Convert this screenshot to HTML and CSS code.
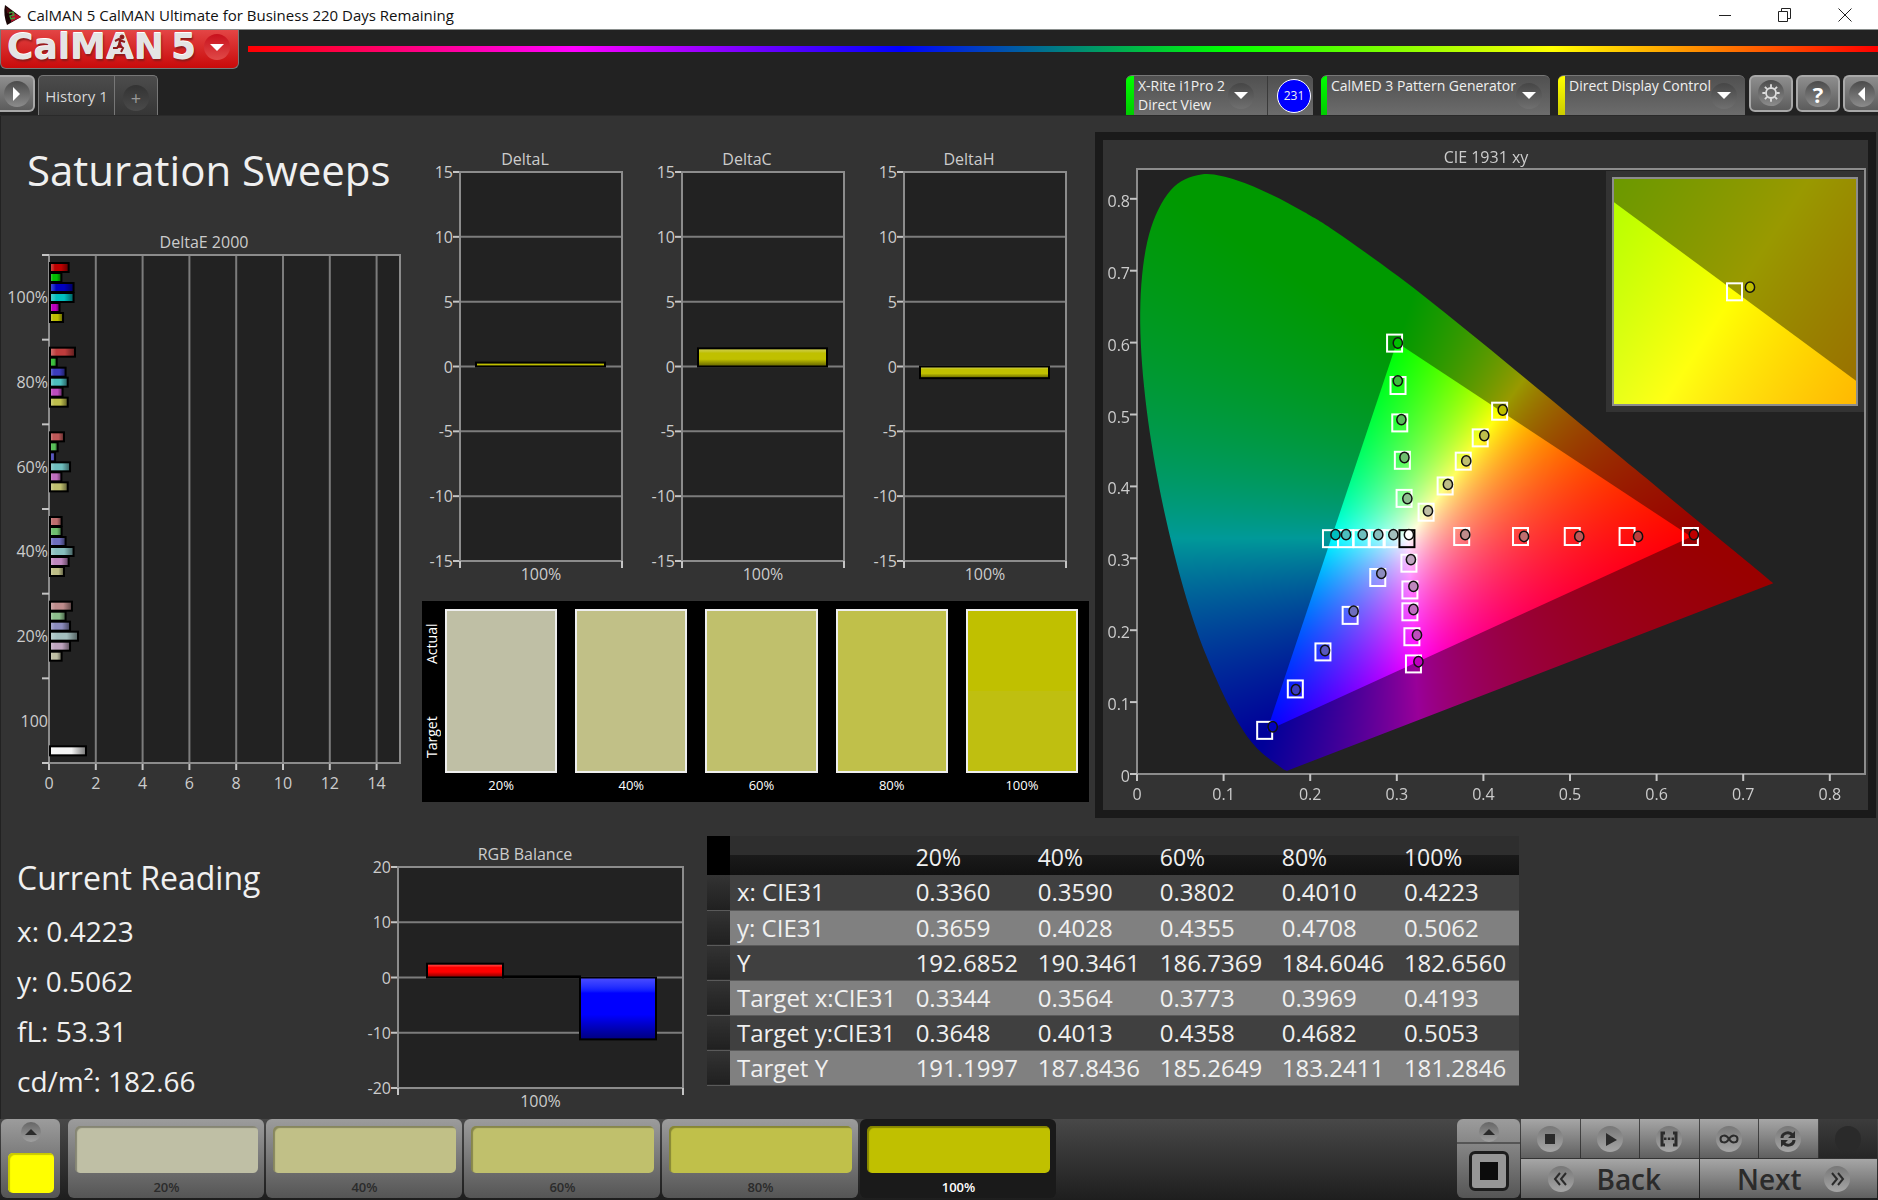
FILE: index.html
```html
<!DOCTYPE html>
<html lang="en">
<head>
<meta charset="utf-8">
<title>CalMAN 5 CalMAN Ultimate for Business 220 Days Remaining</title>
<link rel="stylesheet" href="styles.css">
</head>
<body>

<div class="titlebar">
    <svg class="app-icon" viewBox="0 0 20 22">
        <path d="M2 1 L18 13 L4 21 Q0 10 2 1Z" fill="#1a0505"/>
        <path d="M9 8 L18 13 L8 18Z" fill="#b3122a"/>
        <path d="M3 3 L8 7 L7 10 L4 9Z" fill="#4a0d10"/>
        <path d="M6 9 l4 -1 l1 3 l-4 1 l1 3 l4 -1" fill="none" stroke="#3f9b3a" stroke-width="1.4"/>
    </svg>
    <span class="window-title">CalMAN 5 CalMAN Ultimate for Business 220 Days Remaining</span>
    <button class="win-btn" aria-label="Minimize"><svg viewBox="0 0 16 16"><path d="M2 8.500H14"/></svg></button>
    <button class="win-btn" aria-label="Restore"><svg viewBox="0 0 16 16"><path d="M1.500 4.500H10.500V14.500H1.500Z M4.500 4.500V1.500H13.500V11.500H10.500"/></svg></button>
    <button class="win-btn" aria-label="Close"><svg viewBox="0 0 16 16"><path d="M1.500 1.500L14.500 14.500M14.500 1.500L1.500 14.500"/></svg></button>
</div>

<header class="masthead">
    <div class="brand-row">
        <button class="logo" aria-label="CalMAN 5 menu">
            <span class="logo-text">CalM<span class="logo-a">A<svg class="runner" viewBox="0 0 16 20"><circle cx="10" cy="3" r="2"/><path d="M3 7 L7 5 L10 7 L13 8 M8 6 L7 11 L11 14 L9 18 M7 11 L5 14 L1 14"/></svg></span>N</span>
            <span class="logo-text">5</span>
            <span class="round round-red"><i class="tri down"></i></span>
        </button>
        <div class="rainbow"></div>
    </div>
    <div class="tab-row">
        <button class="square-btn edge-left" aria-label="Expand"><span class="round"><i class="tri right"></i></span></button>
        <nav class="tabs">
            <button class="tab">History 1</button>
            <button class="tab tab-add" aria-label="Add tab"><span class="round round-dark">+</span></button>
        </nav>
        <div class="devices">
            <div class="device device-meter">
                <span class="stripe green"></span>
                <span class="device-name">X-Rite i1Pro 2<br>Direct View</span>
                <button class="round" aria-label="Meter menu"><i class="tri down"></i></button>
                <span class="badge-cell"><span class="badge">231</span></span>
            </div>
            <div class="device device-source">
                <span class="stripe green"></span>
                <span class="device-name">CalMED 3 Pattern Generator</span>
                <button class="round" aria-label="Source menu"><i class="tri down"></i></button>
            </div>
            <div class="device device-display">
                <span class="stripe yellow"></span>
                <span class="device-name">Direct Display Control</span>
                <button class="round" aria-label="Display menu"><i class="tri down"></i></button>
            </div>
        </div>
        <button class="square-btn" aria-label="Settings"><span class="round">
            <svg class="gear" viewBox="0 0 22 22"><circle cx="11" cy="11" r="5.500"/><path d="M11 1.500V5M11 17V20.500M1.500 11H5M17 11H20.500M4.300 4.300L6.800 6.800M15.200 15.200L17.700 17.700M4.300 17.700L6.800 15.200M15.200 6.800L17.700 4.300"/></svg>
        </span></button>
        <button class="square-btn" aria-label="Help"><span class="round help">?</span></button>
        <button class="square-btn edge-right" aria-label="Collapse"><span class="round"><i class="tri left"></i></span></button>
    </div>
</header>

<main class="workspace">
    <section class="upper">
        <div class="col-left">
            <h1>Saturation Sweeps</h1>
            <svg id="delta-e" class="chart" viewBox="0 0 402 570"></svg>
        </div>
        <div class="col-mid">
            <div class="deltas">
                <svg id="delta-l" class="chart" viewBox="0 0 196 437"></svg>
                <svg id="delta-c" class="chart" viewBox="0 0 196 437"></svg>
                <svg id="delta-h" class="chart" viewBox="0 0 196 437"></svg>
            </div>
            <div class="patches">
                <div class="patch-side"><span>Target</span><span>Actual</span></div>
                <figure class="patch"><div class="p20"></div><figcaption>20%</figcaption></figure>
                <figure class="patch"><div class="p40"></div><figcaption>40%</figcaption></figure>
                <figure class="patch"><div class="p60"></div><figcaption>60%</figcaption></figure>
                <figure class="patch"><div class="p80"></div><figcaption>80%</figcaption></figure>
                <figure class="patch"><div class="p100"></div><figcaption>100%</figcaption></figure>
            </div>
        </div>
        <div class="col-right">
            <div class="cie">
                <canvas id="cie-fill" width="765" height="670"></canvas>
                <svg id="cie" class="chart" viewBox="0 0 765 670"></svg>
            </div>
        </div>
    </section>

    <section class="lower">
        <div class="reading">
            <h2>Current Reading</h2>
            <p>x: 0.4223</p>
            <p>y: 0.5062</p>
            <p>fL: 53.31</p>
            <p>cd/m²: 182.66</p>
        </div>
        <svg id="rgb" class="chart" viewBox="0 0 317 272"></svg>
        <table class="results">
            <colgroup><col class="c-mark"><col class="c-name"><col><col><col><col><col></colgroup>
            <thead>
                <tr><th class="mark"></th><th></th><th>20%</th><th>40%</th><th>60%</th><th>80%</th><th>100%</th></tr>
            </thead>
            <tbody>
                <tr><td class="mark"></td><th>x: CIE31</th><td>0.3360</td><td>0.3590</td><td>0.3802</td><td>0.4010</td><td>0.4223</td></tr>
                <tr><td class="mark"></td><th>y: CIE31</th><td>0.3659</td><td>0.4028</td><td>0.4355</td><td>0.4708</td><td>0.5062</td></tr>
                <tr><td class="mark"></td><th>Y</th><td>192.6852</td><td>190.3461</td><td>186.7369</td><td>184.6046</td><td>182.6560</td></tr>
                <tr><td class="mark"></td><th>Target x:CIE31</th><td>0.3344</td><td>0.3564</td><td>0.3773</td><td>0.3969</td><td>0.4193</td></tr>
                <tr><td class="mark"></td><th>Target y:CIE31</th><td>0.3648</td><td>0.4013</td><td>0.4358</td><td>0.4682</td><td>0.5053</td></tr>
                <tr><td class="mark"></td><th>Target Y</th><td>191.1997</td><td>187.8436</td><td>185.2649</td><td>183.2411</td><td>181.2846</td></tr>
            </tbody>
        </table>
    </section>
</main>

<footer class="bar">
    <button class="current" aria-label="Current colour">
        <span class="round round-small"><i class="tri up"></i></span>
        <span class="current-color"></span>
    </button>
    <div class="levels">
        <button class="level"><span class="p20"></span>20%</button>
        <button class="level"><span class="p40"></span>40%</button>
        <button class="level"><span class="p60"></span>60%</button>
        <button class="level"><span class="p80"></span>80%</button>
        <button class="level selected"><span class="p100"></span>100%</button>
    </div>
    <div class="window-size">
        <button class="size-up" aria-label="Pattern size"><span class="round round-small"><i class="tri up"></i></span></button>
        <button class="size-box" aria-label="Pattern window"><span class="size-frame"><i></i></span></button>
    </div>
    <div class="transport">
        <button aria-label="Stop"><span class="round"><svg viewBox="0 0 26 26"><path d="M8 8H18V18H8Z"/></svg></span></button>
        <button aria-label="Play"><span class="round"><svg viewBox="0 0 26 26"><path d="M9 7L20 14L9 20Z"/></svg></span></button>
        <button aria-label="Read series"><span class="round"><svg viewBox="0 0 26 26"><path class="line" d="M9 7H6V19H9M17 7H20V19H17"/><path d="M8 11.500h2.500v2.500h-2.500zM11.800 11.500h2.500v2.500h-2.500zM15.500 11.500h2.500v2.500h-2.500z"/></svg></span></button>
        <button aria-label="Continuous"><span class="round"><svg viewBox="0 0 26 26"><path class="thin" d="M13 13C10 8 4.500 9 4.500 13S10 18 13 13S21.500 9 21.500 13S16 18 13 13Z"/></svg></span></button>
        <button aria-label="Repeat"><span class="round"><svg viewBox="0 0 26 26"><path class="line" d="M7 12C7 7 14 5 17.500 9M19 14C19 19 12 21 8.500 17"/><path d="M20 5V12H13ZM6 21V14H13Z"/></svg></span></button>
        <button class="off" aria-label="Record" disabled><span class="round"></span></button>
        <button class="wide back"><span class="round"><svg viewBox="0 0 26 26"><path class="thin" d="M12 7L7 13L12 19M18 7L13 13L18 19"/></svg></span>Back</button>
        <button class="wide next">Next<span class="round"><svg viewBox="0 0 26 26"><path class="thin" d="M8 7L13 13L8 19M14 7L19 13L14 19"/></svg></span></button>
    </div>
</footer>

<script src="script.js"></script>
</body>
</html>
```
FILE: styles.css
```css
* {
    box-sizing: border-box;
}
body {
    margin: 0;
    min-height: 100vh;
    display: flex;
    flex-direction: column;
    background: #222;
    color: #f0f0f0;
    font-family: "Open Sans", "Noto Sans", sans-serif;
    font-size: 14px;
}
button {
    margin: 0;
    padding: 0;
    border: 0;
    background: none;
    color: inherit;
    font: inherit;
}
h1, h2, p, figure {
    margin: 0;
    font-weight: normal;
}

/* window title bar */
.titlebar {
    display: flex;
    align-items: center;
    height: 30px;
    padding: 0 3px;
    background: #fff;
    border-bottom: 1px solid #8a8f8d;
    color: #111;
}
.app-icon {
    width: 20px;
    height: 22px;
    margin-right: 4px;
}
.window-title {
    flex: 1;
    font-size: 15px;
    line-height: 20px;
}
.win-btn {
    width: 60px;
    height: 28px;
}
.win-btn svg {
    width: 16px;
    height: 16px;
    fill: none;
    stroke: #222;
    display: block;
    margin: 0 auto;
}

/* header */
.brand-row {
    display: flex;
    height: 45px;
}
.logo {
    display: flex;
    align-items: center;
    width: 239px;
    height: 39px;
    padding: 0 8px 4px 6px;
    gap: 7px;
    border: 1px solid #777;
    border-top: 0;
    border-radius: 0 0 6px 6px;
    background: linear-gradient(#e34545, #c90a0a);
}
.logo-text {
    font: bold 36px/36px "DejaVu Sans", sans-serif;
    color: #e4e4e4;
    text-shadow: 0 -1px 0 #fff, 1px 2px 2px #8d1a1a;
}
.logo-a {
    position: relative;
}
.runner {
    position: absolute;
    left: 6px;
    top: 8px;
    width: 16px;
    height: 20px;
    fill: #8d1a1a;
    stroke: #8d1a1a;
}
.runner path {
    fill: none;
    stroke-width: 2;
}
.logo .round {
    margin-left: auto;
}
.rainbow {
    flex: 1;
    height: 6px;
    margin: 16px 0 0 9px;
    background: linear-gradient(to right, #f00, #f0f, #00f, #0f0, #ff0, #f00);
}
.tab-row {
    display: flex;
    height: 40px;
}
.round {
    display: inline-flex;
    align-items: center;
    justify-content: center;
    flex: none;
    width: 26px;
    height: 26px;
    border-radius: 50%;
    background: linear-gradient(#4b4b4b, #8c8c8c);
    color: #fff;
}
.round-red {
    background: linear-gradient(#c8101c, #e04a48);
}
.round-dark {
    background: linear-gradient(#333, #4a4a4a);
    color: #999;
    font-size: 18px;
}
.round-small {
    width: 20px;
    height: 20px;
    background: linear-gradient(#666, #a0a0a0);
}
.tri {
    border: 7px solid transparent;
}
.tri.down {
    border-top-color: #fff;
    border-bottom: 0;
}
.tri.right {
    border-left-color: #fff;
    border-right: 0;
}
.tri.left {
    border-right-color: #fff;
    border-left: 0;
}
.tri.up {
    border-width: 6px;
    border-bottom-color: #2b2b2b;
    border-top: 0;
}
.square-btn {
    width: 44px;
    height: 37px;
    margin-left: 3px;
    border: 2px solid #a8a8a8;
    border-radius: 6px;
    background: linear-gradient(#8e8e8e, #5c5c5c);
}
.edge-left {
    width: 35px;
    margin-left: 0;
    border-left: 0;
    border-radius: 0 6px 6px 0;
}
.edge-right {
    width: 35px;
    border-right: 0;
    border-radius: 6px 0 0 6px;
}
.gear {
    width: 20px;
    height: 20px;
    fill: none;
    stroke: #ddd;
    stroke-width: 2;
}
.help {
    font-size: 22px;
    font-weight: bold;
}
.tabs {
    display: flex;
    margin-left: 3px;
    border: 1px solid #777;
    border-bottom: 0;
    border-radius: 5px 5px 0 0;
    background: linear-gradient(#4c4c4c, #363636);
}
.tab {
    width: 76px;
    border-right: 1px solid #777;
    font-size: 15px;
    color: #d8d8d8;
}
.tab-add {
    width: 42px;
    padding-top: 4px;
    border: 0;
}
.devices {
    display: flex;
    gap: 8px;
    margin: 0 1px 0 auto;
}
.device {
    display: flex;
    align-items: center;
    overflow: hidden;
    border-top: 1px solid #777;
    border-radius: 6px 6px 0 0;
    background: linear-gradient(#505050, #6c6c6c);
}
.device-meter {
    width: 187px;
}
.device-source {
    width: 229px;
}
.device-display {
    width: 187px;
}
.stripe {
    width: 8px;
    align-self: stretch;
    margin-right: 4px;
}
.stripe.green {
    background: linear-gradient(#0f0, #0c0);
}
.stripe.yellow {
    background: linear-gradient(#ff0, #cc0);
}
.device-name {
    flex: 1;
    align-self: flex-start;
    line-height: 19px;
    white-space: nowrap;
}
.device .round {
    margin-right: 8px;
    background: linear-gradient(#464646, #707070);
}
.badge-cell {
    display: flex;
    align-items: center;
    justify-content: flex-end;
    width: 46px;
    align-self: stretch;
    padding-right: 2px;
    border-left: 1px solid #3a3a3a;
    margin-left: 5px;
}
.badge {
    width: 34px;
    height: 34px;
    border: 1px solid #fff;
    border-radius: 50%;
    background: #00f;
    font-size: 12px;
    line-height: 32px;
    text-align: center;
}

/* workspace */
.workspace {
    flex: 1;
    background: #333;
    border-top: 1px solid #2a2a2a;
    box-shadow: inset 1px 0 #222;
}
.chart {
    display: block;
    width: 100%;
    height: auto;
}
.chart text {
    font-size: 16px;
    fill: #ccc;
}
.chart .end {
    text-anchor: end;
}
.chart .mid {
    text-anchor: middle;
}
.plot {
    fill: #222;
}
.frame {
    fill: none;
    stroke: #8c8c8c;
    stroke-width: 2;
}
.grid {
    stroke: #7c7c7c;
    stroke-width: 2;
}
.tick {
    stroke: #c4c4c4;
    stroke-width: 2;
}
.upper {
    display: grid;
    grid-template-columns: 402fr 687fr 787fr;
    padding-right: 2px;
}
h1 {
    padding: 24px 0 30px 27px;
    font-size: 42px;
    line-height: 60px;
}
.col-mid {
    padding: 32px 0 0 20px;
}
.deltas {
    display: grid;
    grid-template-columns: repeat(3, 1fr);
    gap: 26px;
    padding: 0 21px 0 6px;
}
.patches {
    display: flex;
    gap: 18px;
    margin-top: 16px;
    padding: 8px 11px 4px 0;
    background: #000;
    color: #fff;
}
.patch-side {
    display: flex;
    justify-content: space-between;
    width: 23px;
    margin: 0 -18px 25px 0;
    padding: 15px 0;
    line-height: 20px;
    writing-mode: vertical-rl;
    transform: rotate(180deg);
}
.patch {
    flex: 1;
    font-size: 13px;
    text-align: center;
}
.patch div {
    height: 164px;
    border: 2px solid #eee;
}
.patch figcaption {
    line-height: 25px;
}
.p20 {
    background: #bfbfa5;
}
.p40 {
    background: #c1c087;
}
.p60 {
    background: #c0c06c;
}
.p80 {
    background: #c0c04a;
}
.p100 {
    background: #c0c000;
}
.patch .p100 {
    background: linear-gradient(#c0c000 50%, #bfbf10 50%);
}
.col-right {
    padding: 16px 0 0 6px;
}
.cie {
    display: grid;
    border: 8px solid #1a1a1a;
}
.cie > * {
    grid-area: 1 / 1;
    width: 100%;
}
.marker {
    fill: none;
    stroke: #fff;
    stroke-width: 2;
}
.marker.white {
    stroke: #000;
}
.inset-gap {
    fill: none;
    stroke: #333;
    stroke-width: 6;
}

/* readings, balance and results */
.lower {
    display: grid;
    grid-template-columns: 367fr 317fr 23fr 812fr 359fr;
    align-items: start;
    padding-top: 18px;
}
.lower .chart {
    margin-top: 5px;
}
.reading {
    padding: 18px 0 0 17px;
}
.reading h2 {
    font-size: 32px;
    line-height: 48px;
    margin-bottom: 4px;
}
.reading p {
    font-size: 28px;
    line-height: 50px;
}
.results {
    grid-column: 4;
    width: 100%;
    table-layout: fixed;
    border-collapse: collapse;
    font-size: 24px;
    line-height: 34px;
    white-space: nowrap;
}
.c-mark {
    width: 23px;
}
.c-name {
    width: 22%;
}
.results th, .results td {
    padding: 0 0 0 7px;
    text-align: left;
    font-weight: normal;
}
.results thead th {
    height: 39px;
    padding-top: 2px;
    font-size: 23px;
    background: linear-gradient(#2e2e2e 50%, #1a1a1a 50%, #111);
}
.results thead .mark {
    background: #000;
}
.results tbody tr {
    height: 35px;
    background: #404040;
    border-bottom: 1px solid #5a5a5a;
}
.results tbody tr:nth-child(even) {
    background: #808080;
}
.results tbody .mark {
    background: linear-gradient(#333, #202020);
}

/* bottom bar */
.bar {
    display: flex;
    height: 81px;
    padding: 0 1px 2px 1px;
    background: linear-gradient(#484848, #1e1e1e);
    color: #2b2b2b;
}
.current, .level, .window-size {
    border-radius: 6px;
    background: linear-gradient(#9c9c9c, #555);
}
.current {
    display: flex;
    flex-direction: column;
    align-items: center;
    gap: 11px;
    width: 59px;
    padding-top: 3px;
}
.current-color {
    width: 46px;
    height: 40px;
    border-radius: 5px;
    background: #ff0;
    box-shadow: inset 2px 2px 1px #c8c800;
}
.levels {
    display: flex;
    flex: 1;
    gap: 2px;
    margin: 0 8px;
}
.level {
    flex: 0 1 196px;
    display: flex;
    flex-direction: column;
    padding: 7px 6px 0 7px;
    font-size: 13px;
    font-weight: 600;
    line-height: 20px;
    text-align: center;
}
.level span {
    flex: none;
    height: 47px;
    margin-bottom: 4px;
    border-radius: 5px;
    box-shadow: inset 2px 2px 1px rgba(0, 0, 0, 0.3);
}
.level.selected {
    background: #1a1a1a;
    color: #fff;
}
.window-size {
    display: flex;
    flex-direction: column;
    width: 63px;
    margin-right: 1px;
}
.size-up {
    height: 25px;
    border-bottom: 2px solid #555;
}
.size-box {
    flex: 1;
    display: flex;
    align-items: center;
    justify-content: center;
}
.size-frame {
    display: flex;
    align-items: center;
    justify-content: center;
    width: 40px;
    height: 40px;
    border: 3px solid #1c1c1c;
    border-radius: 6px;
    background: #969696;
}
.size-frame i {
    width: 18px;
    height: 18px;
    background: #0c0c0c;
}
.transport {
    display: grid;
    grid-template-columns: repeat(12, 1fr);
    grid-template-rows: 39px 39px;
    gap: 1px;
    width: 356px;
}
.transport button {
    grid-column: span 2;
    display: flex;
    align-items: center;
    justify-content: center;
    background: linear-gradient(#a6a6a6, #606060);
}
.transport .round {
    background: linear-gradient(#777, #a6a6a6);
}
.transport svg {
    width: 26px;
    height: 26px;
    fill: #2b2b2b;
}
.transport .line, .transport .thin {
    fill: none;
    stroke: #2b2b2b;
    stroke-width: 3;
}
.transport .thin {
    stroke-width: 2;
}
.transport .off {
    background: linear-gradient(#3c3c3c, #262626);
}
.transport .off .round {
    background: #2a2a2a;
}
.transport .wide {
    grid-column: span 6;
    gap: 22px;
    font-size: 28px;
    font-weight: 600;
    line-height: 38px;
}
.transport .back {
    padding-right: 10px;
}
.transport .next {
    padding-left: 10px;
}
```
FILE: script.js
```js
var NS = 'http://www.w3.org/2000/svg';

function add(parent, tag, attrs, text) {
    var node = document.createElementNS(NS, tag);
    for (var key in attrs) {
        node.setAttribute(key, attrs[key]);
    }
    if (text !== undefined) {
        node.textContent = text;
    }
    parent.appendChild(node);
    return node;
}

function line(svg, cls, x1, y1, x2, y2) {
    add(svg, 'line', { 'class': cls, x1: x1, y1: y1, x2: x2, y2: y2 });
}

function label(svg, cls, x, y, text) {
    add(svg, 'text', { 'class': cls, x: x, y: y + 6 }, text);
}

// bars fade from a light edge to a dark one
function shade(svg, color, vertical) {
    var id = svg.id + '-g' + svg.querySelectorAll('linearGradient').length,
        g = add(svg, 'linearGradient', vertical ? { id: id, x2: 0, y2: 1 } : { id: id });
    add(g, 'stop', { offset: 0, 'stop-color': 'color-mix(in srgb, ' + color + ' 70%, white)' });
    add(g, 'stop', { offset: 0.25, 'stop-color': color });
    add(g, 'stop', { offset: 0.6, 'stop-color': color });
    add(g, 'stop', { offset: 1, 'stop-color': 'color-mix(in srgb, ' + color + ' 50%, black)' });
    return 'url(#' + id + ')';
}

function bar(svg, x, y, w, h, color, vertical) {
    add(svg, 'rect', { x: x, y: y, width: w, height: h, fill: shade(svg, color, vertical), stroke: '#000', 'stroke-width': 2 });
}

// vertical bar chart with a zero line in the middle
function columnChart(id, title, o) {
    var svg = document.getElementById(id), y0 = o.top + o.height / 2, v, y;
    function py(val) {
        return y0 - val * o.height / (2 * o.max);
    }
    label(svg, 'mid', (o.left + o.width) / 2, o.titleY, title);
    add(svg, 'rect', { 'class': 'plot', x: o.left, y: o.top, width: o.width, height: o.height });
    for (v = -o.max; v <= o.max; v += o.step) {
        y = py(v);
        line(svg, 'grid', o.left, y, o.left + o.width, y);
        line(svg, 'tick', o.left - 7, y, o.left, y);
        label(svg, 'end', o.left - 7, y, v);
    }
    add(svg, 'rect', { 'class': 'frame', x: o.left, y: o.top, width: o.width, height: o.height });
    line(svg, 'tick', o.left, o.top + o.height, o.left, o.top + o.height + 7);
    line(svg, 'tick', o.left + o.width, o.top + o.height, o.left + o.width, o.top + o.height + 7);
    label(svg, 'mid', o.left + o.width / 2, o.top + o.height + 13, '100%');
    o.bars.forEach(function (b) {
        var top = Math.min(py(b.value), y0);
        bar(svg, o.left + b.x, top, b.w, Math.max(Math.abs(py(b.value) - y0), 1), b.color, true);
    });
}

[['delta-l', 'DeltaL', 0.3], ['delta-c', 'DeltaC', 1.4], ['delta-h', 'DeltaH', -0.9]].forEach(function (d) {
    columnChart(d[0], d[1], {
        left: 32, top: 24, width: 162, height: 389, titleY: 11, max: 15, step: 5,
        bars: [{ x: 16, w: 129, value: d[2], color: '#c0c000' }]
    });
});

columnChart('rgb', 'RGB Balance', {
    left: 31, top: 26, width: 285, height: 221, titleY: 13, max: 20, step: 10,
    bars: [
        { x: 29, w: 76, value: 2.5, color: '#ff0000' },
        { x: 105, w: 77, value: 0.2, color: '#00c000' },
        { x: 182, w: 76, value: -11.2, color: '#0000ff' }
    ]
});

// measured colour of a sweep step, level 0 is 20% and level 4 is 100%
var hues = { r: [1, 0, 0], g: [0, 1, 0], b: [0, 0, 1], c: [0, 1, 1], m: [1, 0, 1], y: [1, 1, 0] },
    lowSingle = [140, 110, 88, 60, 0],
    lowDouble = [163, 135, 110, 76, 0];

function sweepColor(hue, level) {
    var low = 'rgb'.indexOf(hue) >= 0 ? lowSingle[level] : lowDouble[level];
    return 'rgb(' + hues[hue].map(function (on) { return on ? 190 : low; }).join(',') + ')';
}

(function deltaE() {
    var svg = document.getElementById('delta-e'),
        left = 49, top = 25, width = 351, height = 508, unit = width / 15, row = height / 6,
        names = ['100%', '80%', '60%', '40%', '20%', '100'],
        values = [
            [0.84, 0.53, 1.05, 1.05, 0.45, 0.6],
            [1.11, 0.33, 0.71, 0.8, 0.58, 0.8],
            [0.64, 0.37, 0.26, 0.9, 0.53, 0.8],
            [0.54, 0.54, 0.71, 1.05, 0.84, 0.64],
            [0.98, 0.71, 0.9, 1.24, 0.9, 0.54]
        ];
    label(svg, 'mid', 204, 12, 'DeltaE 2000');
    add(svg, 'rect', { 'class': 'plot', x: left, y: top, width: width, height: height });
    for (var v = 0; v < 15; v += 2) {
        line(svg, 'grid', left + v * unit, top, left + v * unit, top + height);
        line(svg, 'tick', left + v * unit, top + height, left + v * unit, top + height + 7);
        label(svg, 'mid', left + v * unit, top + height + 20, v);
    }
    add(svg, 'rect', { 'class': 'frame', x: left, y: top, width: width, height: height });
    for (var i = 0; i <= 6; i++) {
        line(svg, 'tick', left - 7, top + i * row, left, top + i * row);
    }
    names.forEach(function (name, n) {
        label(svg, 'end', left - 1, top + (n + 0.5) * row, name);
    });
    values.forEach(function (group, n) {
        group.forEach(function (val, k) {
            bar(svg, left + 1, top + n * row + 8 + k * 10, val * unit - 1, 9, sweepColor('rgbcmy'[k], 4 - n));
        });
    });
    bar(svg, left + 1, top + 5 * row + 68, 1.58 * unit - 1, 9, '#f4f4f4');
})();

var targets = {
        r: [[.3755, .331], [.4434, .331], [.5032, .331], [.5665, .331], [.6396, .331]],
        g: [[.309, .384], [.307, .437], [.304, .489], [.302, .541], [.298, .6]],
        b: [[.2786, .274], [.2467, .2213], [.2153, .1705], [.1834, .119], [.148, .0614]],
        c: [[.294, .328], [.278, .328], [.2594, .328], [.2415, .328], [.224, .328]],
        m: [[.3146, .2939], [.3157, .2567], [.3157, .2263], [.318, .1916], [.3198, .1538]],
        y: [[.3344, .3648], [.3564, .4013], [.3773, .4358], [.3969, .4682], [.4193, .5053]]
    },
    actuals = {
        r: [[.379, .3329], [.4469, .3304], [.5107, .3304], [.5786, .3304], [.643, .3329]],
        g: [[.3122, .3831], [.3088, .4402], [.3053, .4929], [.3012, .5468], [.3012, .5995]],
        b: [[.2821, .279], [.2501, .2263], [.2171, .1717], [.1834, .1172], [.1567, .0657]],
        c: [[.296, .3329], [.2786, .3329], [.2606, .3329], [.2414, .3329], [.2292, .3329]],
        m: [[.3163, .2982], [.3192, .261], [.3192, .2288], [.3233, .1934], [.325, .1562]],
        y: [[.3360, .3659], [.3590, .4028], [.3802, .4355], [.4010, .4708], [.4223, .5062]]
    },
    locus = [
        [.1741, .005], [.1714, .0051], [.1644, .0109], [.1566, .0177], [.144, .0297], [.1355, .0399],
        [.1241, .0578], [.1096, .0868], [.0913, .1327], [.0687, .2007], [.0454, .295], [.0235, .4127],
        [.0082, .5384], [.0039, .6548], [.0139, .7502], [.0389, .812], [.0743, .8338], [.1142, .8262],
        [.1547, .8059], [.1929, .7816], [.2296, .7543], [.3016, .6923], [.3731, .6245], [.4441, .5547],
        [.5125, .4866], [.5752, .4242], [.627, .3725], [.6915, .3083], [.7347, .2653]
    ],
    gamut = [[.64, .33], [.3, .6], [.15, .06]],
    mainView = { x: 34, y: 29, w: 728, h: 605, x0: 0, y0: 0, sx: 866, sy: 719 },
    insetView = { x: 510, y: 38, w: 244, h: 227, x0: .3949, y0: .4808, sx: 5000, sy: 4640 };

function toPx(view, p) {
    return [view.x + (p[0] - view.x0) * view.sx, view.y + view.h - (p[1] - view.y0) * view.sy];
}

// chromaticity layer, scaled so that the strongest channel reaches "peak"
function layer(view, peak) {
    var c = document.createElement('canvas'), ctx, img, i = 0;
    c.width = view.w;
    c.height = view.h;
    ctx = c.getContext('2d');
    img = ctx.createImageData(view.w, view.h);
    for (var py = 0; py < view.h; py++) {
        for (var px = 0; px < view.w; px++, i += 4) {
            var x = view.x0 + px / view.sx,
                y = view.y0 + (view.h - py) / view.sy,
                z = 1 - x - y,
                r = Math.max(0, 3.2406 * x - 1.5372 * y - 0.4986 * z),
                g = Math.max(0, -0.9689 * x + 1.8758 * y + 0.0415 * z),
                b = Math.max(0, 0.0557 * x - 0.204 * y + 1.057 * z),
                k = peak / Math.max(r, g, b);
            img.data[i] = r * k;
            img.data[i + 1] = g * k;
            img.data[i + 2] = b * k;
            img.data[i + 3] = 255;
        }
    }
    ctx.putImageData(img, 0, 0);
    return c;
}

// closed outline; smooth ones run as a spline through every point
function outline(ctx, view, points, smooth) {
    var pts = points.map(function (p) { return toPx(view, p); }),
        last = pts.length - 1;
    ctx.beginPath();
    ctx.moveTo(pts[0][0], pts[0][1]);
    for (var i = 0; i < last; i++) {
        var a = pts[Math.max(i - 1, 0)], b = pts[i], c = pts[i + 1], d = pts[Math.min(i + 2, last)];
        if (smooth) {
            ctx.bezierCurveTo(b[0] + (c[0] - a[0]) / 6, b[1] + (c[1] - a[1]) / 6,
                c[0] - (d[0] - b[0]) / 6, c[1] - (d[1] - b[1]) / 6, c[0], c[1]);
        } else {
            ctx.lineTo(c[0], c[1]);
        }
    }
    ctx.closePath();
}

function paint(ctx, view) {
    [[locus, 153, true], [gamut, 255, false]].forEach(function (part) {
        ctx.save();
        ctx.beginPath();
        ctx.rect(view.x, view.y, view.w, view.h);
        ctx.clip();
        outline(ctx, view, part[0], part[2]);
        ctx.clip();
        ctx.drawImage(layer(view, part[1]), view.x, view.y);
        ctx.restore();
    });
}

function square(svg, view, p, cls) {
    var c = toPx(view, p);
    add(svg, 'rect', { 'class': 'marker ' + cls, x: c[0] - 8, y: c[1] - 8, width: 15, height: 17 });
}

function dot(svg, view, p, fill) {
    var c = toPx(view, p);
    add(svg, 'ellipse', { cx: c[0], cy: c[1], rx: 4.6, ry: 5.2, fill: fill, stroke: '#111', 'stroke-width': 1.500 });
}

(function cie() {
    var svg = document.getElementById('cie'),
        ctx = document.getElementById('cie-fill').getContext('2d'),
        m = mainView, n = insetView, base = m.y + m.h, i, p;
    ctx.fillStyle = '#222';
    ctx.fillRect(m.x, m.y, m.w, m.h);
    paint(ctx, m);
    paint(ctx, n);

    label(svg, 'mid', 383, 17, 'CIE 1931 xy');
    add(svg, 'rect', { 'class': 'frame', x: m.x, y: m.y, width: m.w, height: m.h });
    for (i = 0; i <= 8; i++) {
        p = toPx(m, [i / 10, i / 10]);
        line(svg, 'tick', m.x - 7, p[1], m.x, p[1]);
        label(svg, 'end', m.x - 7, p[1] + 2, i / 10);
        line(svg, 'tick', p[0], base, p[0], base + 7);
        label(svg, 'mid', p[0], base + 20, i / 10);
    }
    for (var hue in targets) {
        targets[hue].forEach(function (t) {
            square(svg, m, t, '');
        });
    }
    square(svg, m, [.3123, .328], 'white');
    for (hue in actuals) {
        actuals[hue].forEach(function (a, level) {
            dot(svg, m, a, sweepColor(hue, level));
        });
    }
    dot(svg, m, [.314, .3329], '#fff');

    add(svg, 'rect', { 'class': 'inset-gap', x: n.x - 4, y: n.y - 4, width: n.w + 8, height: n.h + 8 });
    add(svg, 'rect', { 'class': 'frame', x: n.x, y: n.y, width: n.w, height: n.h });
    square(svg, n, targets.y[4], '');
    dot(svg, n, actuals.y[4], sweepColor('y', 4));
})();
```
